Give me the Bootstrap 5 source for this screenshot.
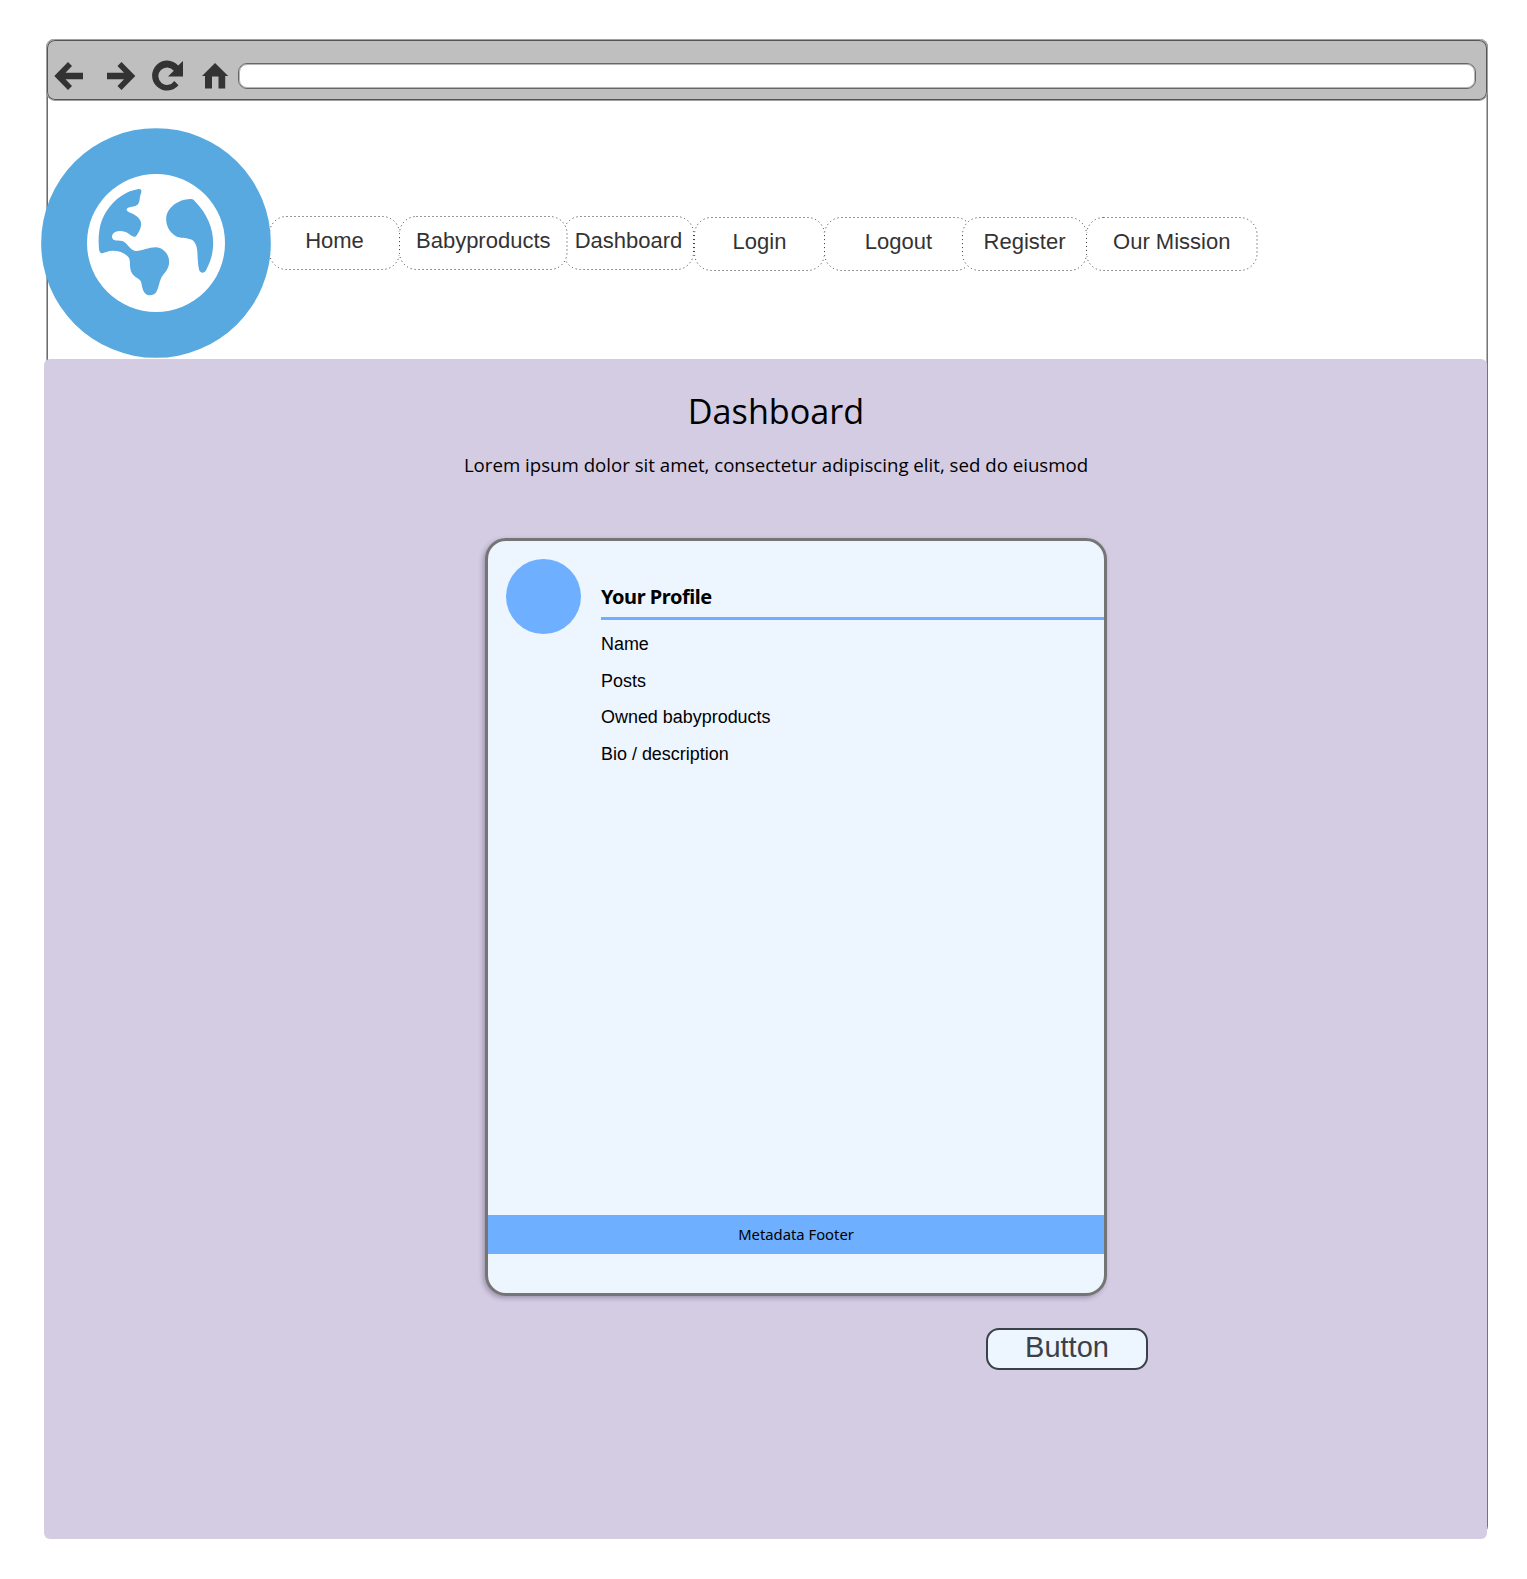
<!DOCTYPE html>
<html lang="en">
<head>
<meta charset="utf-8">
<meta name="viewport" content="width=device-width, initial-scale=1">
<title>Dashboard</title>
<link rel="stylesheet" href="https://cdn.jsdelivr.net/npm/bootstrap@5.3.0/dist/css/bootstrap.min.css">
<style>
body{background:#fff;font-family:"Liberation Sans",Arial,sans-serif;color:#000;min-height:1579px;padding-top:39px}
.browser{width:1442px;height:1495px;margin-left:46px;border:solid #a9a9a9;border-width:0 1px;border-right-color:#757575;border-radius:8px;box-shadow:inset 1px 0 #6d6d6d,inset -1px 0 #b5b5b5}
.toolbar{height:62px;margin:0 -1px;background:#bfbfbf;border:1px solid #a0a0a0;box-shadow:inset 0 0 0 1px #555;border-radius:9px;padding:11px 11px 0 7px;color:#333}
.toolbar svg{display:block;fill:currentColor;flex:none}
.icon-next{margin-left:22px}
.icon-reload{margin-left:15px}
.icon-home{margin-left:18px}
.address{height:26px;background:#fff;border:1px solid #666;box-shadow:inset 0 0 0 1px #b5b5b5;border-radius:9px;margin-left:9px}
.site-head{height:258px;padding-top:27px}
.logo{width:230px;height:230px;margin-left:-6px;flex:none;position:relative;z-index:3}
.menu{margin:88px 0 0 -2px;font-size:22px;color:#333}
.pill{height:54px;border-radius:18px;background:#fff;display:flex;justify-content:center;line-height:25px;padding-top:12px;color:inherit;text-decoration:none;white-space:nowrap;flex:none;position:relative}
.pill svg{position:absolute;inset:0;width:100%;height:100%}
.pill rect{x:.5px;y:.5px;width:calc(100% - 1px);height:calc(100% - 1px);rx:17px;fill:none;stroke:#333;stroke-width:1;stroke-dasharray:1 3}
.pill.low{margin-top:1px}
.pill.front{z-index:1}
.w-home{width:131px}
.w-products{width:168.5px;margin-left:-1px}
.w-dash{width:131px;margin-left:-4.5px}
.w-login{width:131px}
.w-logout{width:149px;margin-left:-1px}
.w-register{width:125px;margin-left:-11px}
.w-mission{width:171.5px;margin-left:-1px}
.panel{height:1180px;margin-left:-3px;background:#d4cce3;border-radius:6px;position:relative}
.panel h1{font:400 34.2px/48px "Open Sans","Noto Sans",sans-serif;margin:0;padding:28px 0 0 21px}
.intro{font:400 18.67px/26px "Open Sans","Noto Sans",sans-serif;padding:17px 0 0 21px;margin:0}
.profile{width:622px;height:758px;margin:60px 0 0 441px;background:#edf5ff;border:3px solid #757575;border-radius:21px;box-shadow:-2px 2px 5px rgba(40,35,60,.32)}
.avatar{width:75px;height:75px;border-radius:50%;background:#6eb0ff;margin:18px 20px 0 18px;flex:none}
.profile h2{font:700 20px/28px "Noto Sans",sans-serif;letter-spacing:-.46px;margin:0;padding:42px 0 6px;border-bottom:3px solid #6eb0ff}
.fields{font-size:17.95px;line-height:36.7px;padding-top:5.8px}
.meta-foot{height:39px;margin:auto 0 39px;background:#6eb0ff;font:400 14.8px/39px "Noto Sans",sans-serif}
.action{width:162px;height:42px;margin:32px 0 0 942px;background:#edf5ff;border:2px solid #3a414a;border-radius:13px;color:#3a414a;font-size:29px;line-height:33px;padding:0 0 3px;display:block}
</style>
<script src="https://cdn.jsdelivr.net/npm/bootstrap@5.3.0/dist/js/bootstrap.bundle.min.js"></script>
</head>
<body>
<div class="browser d-flex flex-column">
  <div class="toolbar d-flex align-items-center flex-shrink-0">
    <svg width="30" height="30" viewBox="0 0 30 30"><path d="M.3 15 14 1l4 4-6.500 6.700H29v6.600H11.500L18 25l-4 4z"/></svg>
    <svg class="icon-next" width="30" height="30" viewBox="0 0 30 30"><path d="M29.300 15 15.500 1l-4 4 6.500 6.700H1v6.600h17L11.500 25l4 4z"/></svg>
    <svg class="icon-reload" width="32" height="32" viewBox="0 0 32 32"><path d="M27.500 25.300A15 15 0 1 1 27.200 5.500L32 1v15.500H17l5.800-5.800A8.700 8.700 0 1 0 23.300 21z"/></svg>
    <svg class="icon-home" width="28" height="28" viewBox="0 0 28 28"><path d="M14 1 27.200 14h-3v12.500h-6.700V14.500h-6.500v12h-7V14H1z"/></svg>
    <div class="address flex-grow-1"></div>
  </div>

  <header class="site-head d-flex align-items-start flex-shrink-0">
    <svg class="logo" viewBox="33 54 689 690">
      <circle cx="377.500" cy="399" r="344.500" fill="#57a9e0"/>
      <circle cx="377.500" cy="399" r="207" fill="#fff"/>
      <path fill="#57a9e0" d="M322 238C334 235 336 243 331 254C327 268 330 275 322 284C312 292 292 288 289 299C292 306 300 307 309 312C322 320 333 328 333 343C332 358 325 368 318 378C312 384 306 378 298 373C285 363 268 361 255 366C244 371 243 384 250 389C258 393 268 390 277 393C292 400 299 418 313 422C330 426 352 412 377 412C400 413 417 434 417 455C417 478 402 488 394 502C386 518 386 534 378 547C371 557 355 558 347 552C336 543 336 526 332 514C325 503 309 502 302 483C298 470 301 455 297 445C288 430 268 422 248 422C235 422 225 427 217 430C209 430 207 424 206 410C203 360 212 330 230 302C255 265 290 243 322 238Z"/>
      <path fill="#57a9e0" d="M480 267C488 266 491 269 497 277C530 312 549 353 549 399C549 430 541 455 528 480C523 490 511 491 507 480C502 460 503 440 501 420C499 400 490 388 475 386C460 383 445 385 433 376C415 362 408 345 408 327C409 292 445 268 480 267Z"/>
    </svg>
    <nav class="menu d-flex">
      <a class="pill w-home" href="#"><svg><rect/></svg>Home</a>
      <a class="pill front w-products" href="#"><svg><rect/></svg>Babyproducts</a>
      <a class="pill w-dash" href="#"><svg><rect/></svg>Dashboard</a>
      <a class="pill low w-login" href="#"><svg><rect/></svg>Login</a>
      <a class="pill low w-logout" href="#"><svg><rect/></svg>Logout</a>
      <a class="pill low front w-register" href="#"><svg><rect/></svg>Register</a>
      <a class="pill low w-mission" href="#"><svg><rect/></svg>Our Mission</a>
    </nav>
  </header>

  <main class="panel flex-shrink-0">
    <h1 class="text-center">Dashboard</h1>
    <p class="intro text-center">Lorem ipsum dolor sit amet, consectetur adipiscing elit, sed do eiusmod</p>
    <section class="profile d-flex flex-column">
      <div class="d-flex">
        <div class="avatar"></div>
        <div class="flex-grow-1">
          <h2>Your Profile</h2>
          <div class="fields">
            <div>Name</div>
            <div>Posts</div>
            <div>Owned babyproducts</div>
            <div>Bio / description</div>
          </div>
        </div>
      </div>
      <div class="meta-foot text-center">Metadata Footer</div>
    </section>
    <button class="action" type="button">Button</button>
  </main>
</div>
</body>
</html>
